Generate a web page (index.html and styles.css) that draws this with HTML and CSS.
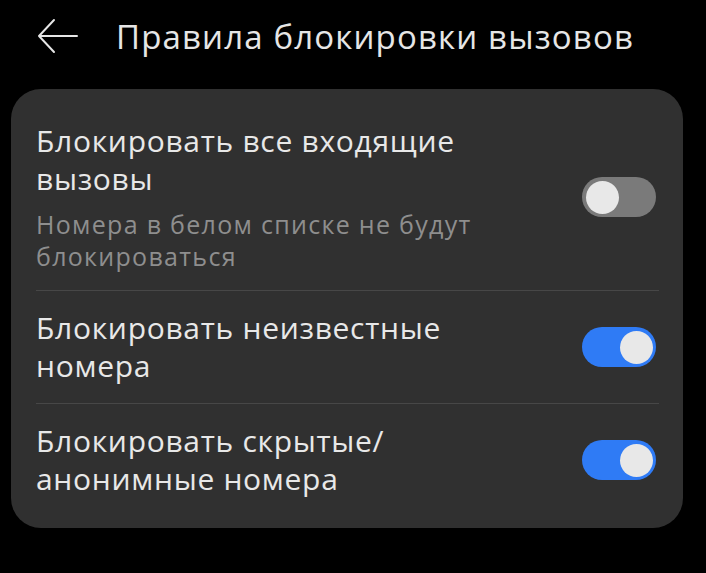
FILE: index.html
```html
<!DOCTYPE html>
<html lang="ru">
  <head>
    <meta charset="UTF-8" />
    <meta name="viewport" content="width=device-width, initial-scale=1.0" />
    <title>Правила блокировки вызовов</title>
    <link rel="stylesheet" href="styles.css">
  </head>
  <body>
    <div class="header">
      <svg class="back" width="42" height="36" viewBox="0 0 42 36">
        <path d="M40 18 H2 M17 2 L2 18 L17 34" fill="none" stroke="#e6e6e6" stroke-width="2" stroke-linecap="round" stroke-linejoin="round" />
      </svg>
      <h1>Правила блокировки вызовов</h1>
    </div>

    <div class="card">
      <div class="row">
        <div class="text">
          <div class="label">Блокировать все входящие<br>вызовы</div>
          <div class="hint">Номера в белом списке не будут<br>блокироваться</div>
        </div>
        <div class="switch"><span class="knob"></span></div>
      </div>
      <div class="row">
        <div class="text">
          <div class="label">Блокировать неизвестные<br>номера</div>
        </div>
        <div class="switch on"><span class="knob"></span></div>
      </div>
      <div class="row">
        <div class="text">
          <div class="label">Блокировать скрытые/<br>анонимные номера</div>
        </div>
        <div class="switch on"><span class="knob"></span></div>
      </div>
    </div>
  </body>
</html>
```

FILE: styles.css
```css
body {
  font-family: "Open Sans", "Noto Sans", sans-serif;
  margin: 0;
  background-color: #000;
  color: #e8e8e8;
}
.header {
  display: flex;
  align-items: center;
  height: 72px;
  padding-left: 37px;
}
.back {
  flex: none;
}
h1 {
  margin: 0 0 0 37px;
  font-size: 33px;
  font-weight: 400;
  letter-spacing: 1.15px;
  color: #e6e6e6;
  white-space: nowrap;
}
.card {
  margin: 17px 23px 0 11px;
  padding: 15px 24px 12px 25px;
  background: #303030;
  border-radius: 30px;
}
.row {
  display: flex;
  align-items: center;
  padding: 18px 0;
  border-bottom: 1px solid #474747;
}
.row:last-child {
  border-bottom: none;
}
.text {
  flex: 1;
  white-space: nowrap;
}
.label {
  font-size: 30px;
  line-height: 38px;
  letter-spacing: 0.7px;
  color: #e8e8e8;
}
.hint {
  margin-top: 10px;
  font-size: 25px;
  line-height: 32px;
  letter-spacing: 1.3px;
  color: #8e8e8e;
}
.switch {
  flex: none;
  position: relative;
  width: 74px;
  height: 40px;
  margin-right: 3px;
  border-radius: 20px;
  background: #7a7a7a;
}
.switch.on {
  background: #2f7bf5;
}
.knob {
  position: absolute;
  top: 3.5px;
  left: 3.5px;
  width: 33px;
  height: 33px;
  border-radius: 50%;
  background: #e8e8e8;
}
.switch.on .knob {
  left: auto;
  right: 3.5px;
}
```
